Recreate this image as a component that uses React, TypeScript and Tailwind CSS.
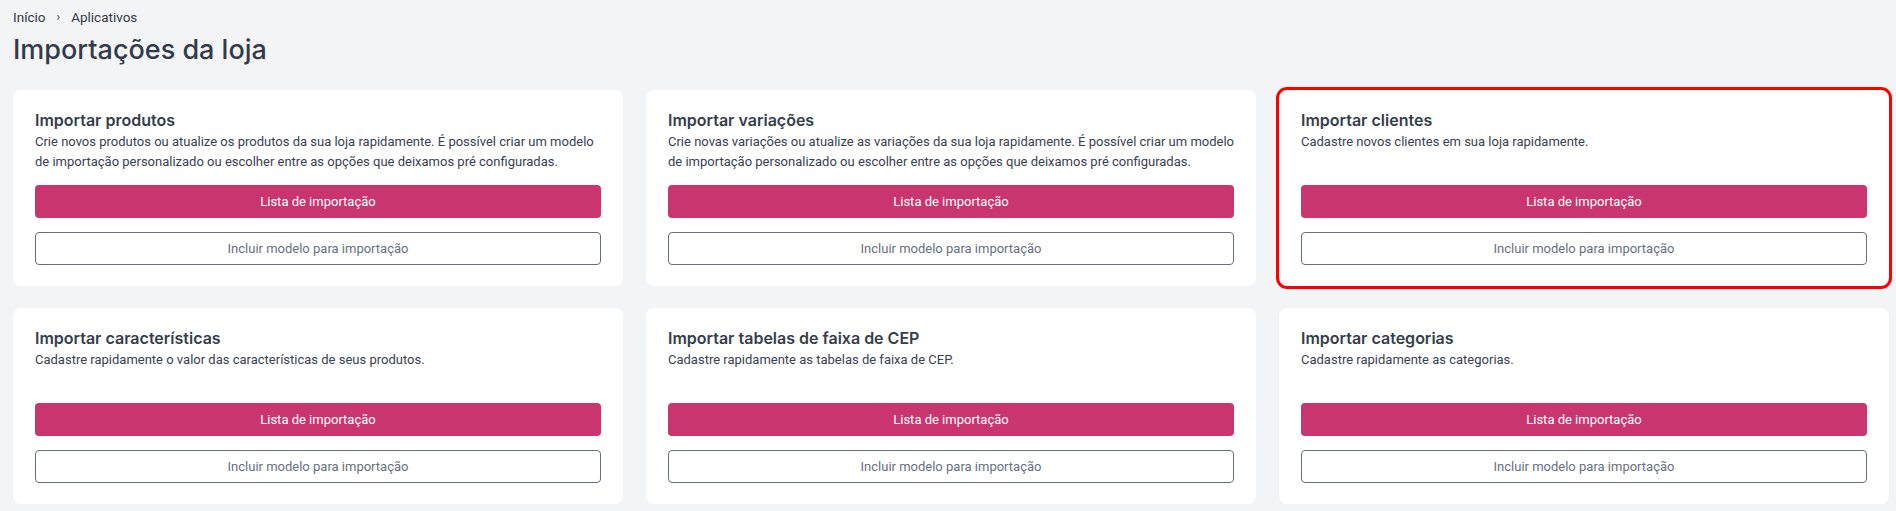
import React from "react"

interface ImportCard {
  id: string
  title: string
  description: string
  highlighted?: boolean
}

const cards: ImportCard[] = [
  {
    id: "produtos",
    title: "Importar produtos",
    description:
      "Crie novos produtos ou atualize os produtos da sua loja rapidamente. É possível criar um modelo de importação personalizado ou escolher entre as opções que deixamos pré configuradas.",
  },
  {
    id: "variacoes",
    title: "Importar variações",
    description:
      "Crie novas variações ou atualize as variações da sua loja rapidamente. É possível criar um modelo de importação personalizado ou escolher entre as opções que deixamos pré configuradas.",
  },
  {
    id: "clientes",
    title: "Importar clientes",
    description: "Cadastre novos clientes em sua loja rapidamente.",
    highlighted: true,
  },
  {
    id: "caracteristicas",
    title: "Importar características",
    description: "Cadastre rapidamente o valor das características de seus produtos.",
  },
  {
    id: "cep",
    title: "Importar tabelas de faixa de CEP",
    description: "Cadastre rapidamente as tabelas de faixa de CEP.",
  },
  {
    id: "categorias",
    title: "Importar categorias",
    description: "Cadastre rapidamente as categorias.",
  },
]

const headingFont = "font-['Inter','Noto_Sans',sans-serif]"
const bodyFont = "font-['Roboto','Liberation_Sans',sans-serif]"

function Card({ card }: { card: ImportCard }) {
  return (
    <div
      className={
        "flex h-[196px] flex-col rounded-lg bg-white px-[22px] pt-[18px] pb-[21px] " +
        (card.highlighted ? "outline-[3px] outline-solid outline-[#ff0000]" : "")
      }
    >
      <h2 className={`${headingFont} text-[16px] leading-6 font-semibold text-[#363d4b]`}>{card.title}</h2>
      <p className={`${bodyFont} min-h-[39px] text-[13px] leading-[19.5px] text-[#3a4150]`}>{card.description}</p>

      <div className={`${bodyFont} mt-auto flex flex-col gap-[14px]`}>
        <button className="h-[33px] w-full rounded-[4px] bg-[#c9366f] text-[13px] text-white">
          Lista de importação
        </button>
        <button className="h-[33px] w-full rounded-[4px] border border-[#676e7e] bg-white text-[13px] text-[#687080]">
          Incluir modelo para importação
        </button>
      </div>
    </div>
  )
}

export default function App() {
  return (
    <div className="min-h-screen bg-[#f3f4f6] pt-[8px] pr-[7px] pl-[13px]">
      {/* Breadcrumb */}
      <nav className={`${bodyFont} flex items-center gap-[11px] text-[13.5px] leading-[18px] text-[#333a47]`}>
        <span>Início</span>
        <span className="text-[12px]">›</span>
        <span>Aplicativos</span>
      </nav>

      <h1 className={`${headingFont} mt-[6px] text-[27px] leading-[36px] font-medium text-[#333b4a]`}>
        Importações da loja
      </h1>

      <div className="mt-[22px] grid grid-cols-3 gap-x-[23px] gap-y-[22px]">
        {cards.map((card) => (
          <Card key={card.id} card={card} />
        ))}
      </div>
    </div>
  )
}
